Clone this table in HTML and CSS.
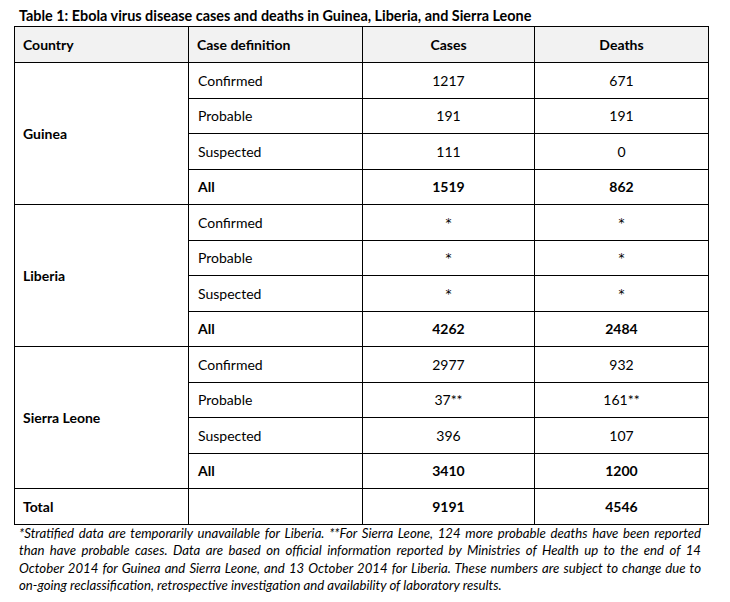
FILE: index.html
```html
<!DOCTYPE html>
<html>
<head>
<meta charset="utf-8">
<link rel="stylesheet" href="styles.css">
</head>
<body>
<div class="page">
  <div class="title">Table 1: Ebola virus disease cases and deaths in Guinea, Liberia, and Sierra Leone</div>
  <table class="data">
    <colgroup>
      <col class="c1"><col class="c2"><col class="c3"><col class="c4">
    </colgroup>
    <thead>
      <tr class="head">
        <th class="left">Country</th>
        <th class="left">Case definition</th>
        <th>Cases</th>
        <th>Deaths</th>
      </tr>
    </thead>
    <tbody>
      <tr><td class="country" rowspan="4">Guinea</td><td class="def">Confirmed</td><td>1217</td><td>671</td></tr>
      <tr><td class="def">Probable</td><td>191</td><td>191</td></tr>
      <tr><td class="def">Suspected</td><td>111</td><td>0</td></tr>
      <tr class="all"><td class="def">All</td><td>1519</td><td>862</td></tr>

      <tr><td class="country" rowspan="4">Liberia</td><td class="def">Confirmed</td><td class="star">*</td><td class="star">*</td></tr>
      <tr><td class="def">Probable</td><td class="star">*</td><td class="star">*</td></tr>
      <tr><td class="def">Suspected</td><td class="star">*</td><td class="star">*</td></tr>
      <tr class="all"><td class="def">All</td><td>4262</td><td>2484</td></tr>

      <tr><td class="country" rowspan="4">Sierra Leone</td><td class="def">Confirmed</td><td>2977</td><td>932</td></tr>
      <tr><td class="def">Probable</td><td>37**</td><td>161**</td></tr>
      <tr><td class="def">Suspected</td><td>396</td><td>107</td></tr>
      <tr class="all"><td class="def">All</td><td>3410</td><td>1200</td></tr>

      <tr class="all"><td class="country">Total</td><td class="def"></td><td>9191</td><td>4546</td></tr>
    </tbody>
  </table>
  <p class="note">*Stratified data are temporarily unavailable for Liberia. **For Sierra Leone, 124 more probable deaths have been reported than have probable cases. Data are based on official information reported by Ministries of Health up to the end of 14 October 2014 for Guinea and Sierra Leone, and 13 October 2014 for Liberia. These numbers are subject to change due to on-going reclassification, retrospective investigation and availability of laboratory results.</p>
</div>
</body>
</html>
```

FILE: styles.css
```css
html, body {
  margin: 0;
  padding: 0;
  background: #ffffff;
}

body {
  font-family: Lato, "Open Sans", sans-serif;
  color: #000000;
}

.page {
  padding: 6px 0 0 14px;
  width: 693px;
}

.title {
  font-weight: bold;
  font-size: 14.4px;
  line-height: 20px;
  padding-left: 5px;
  white-space: nowrap;
}

.data {
  border-collapse: collapse;
  table-layout: fixed;
  width: 694px;
  font-size: 14px;
}

.c1 { width: 174px; }
.c2 { width: 174px; }
.c3 { width: 172px; }
.c4 { width: 174px; }

.data th,
.data td {
  border: 1px solid #000000;
  height: 35.5px;
  padding: 0 8px;
  box-sizing: border-box;
  text-align: center;
  vertical-align: middle;
  white-space: nowrap;
}

.data .head th {
  background: #f2f2f2;
  font-weight: bold;
  height: 36px;
}

.data th.left,
.data td.country,
.data td.def {
  text-align: left;
}

.data td.def {
  padding-left: 9px;
}

.data td.country {
  font-weight: bold;
}

.data tr.all td {
  font-weight: bold;
}

.data td.star {
  font-size: 12px;
  font-family: "DejaVu Sans", sans-serif;
  padding-top: 1px;
}

.note {
  margin: 0;
  padding: 0 6px 0 5px;
  font-style: italic;
  font-size: 13.2px;
  line-height: 17.5px;
  text-align: justify;
}
```
